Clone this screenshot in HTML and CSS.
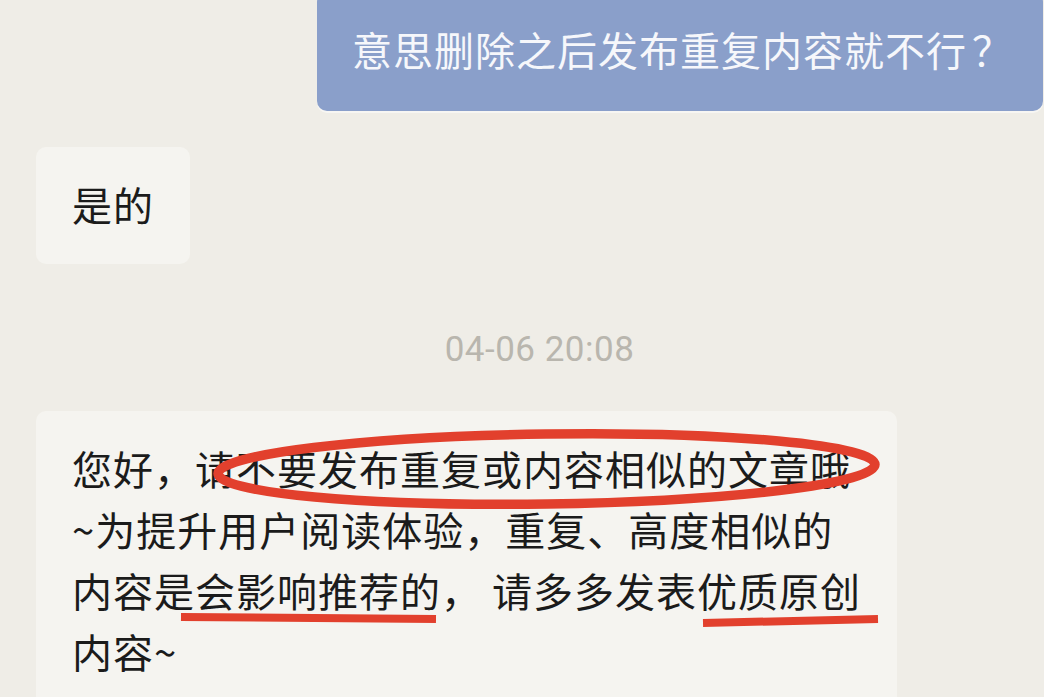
FILE: index.html
```html
<!DOCTYPE html>
<html lang="zh-CN">
<head>
<meta charset="utf-8">
<title>聊天</title>
<link rel="stylesheet" href="styles.css">
</head>
<body>
<div class="chat">
  <div class="bubble bubble-out">意思删除之后发布重复内容就不行<span class="qmark">？</span></div>
  <div class="bubble bubble-in">是的</div>
  <div class="timestamp">04-06 20:08</div>
  <div class="bubble bubble-in bubble-wide">
    您好，请不要发布重复或内容相似的文章哦<br>~为提升用户阅读体验，重复、高度相似的<br>内容是会影响推荐的， 请多多发表优质原创<br>内容~
    <svg class="marks" viewBox="0 0 861 300" width="861" height="300" aria-hidden="true">
      <ellipse cx="510.5" cy="58" rx="328.5" ry="35" transform="rotate(-0.8 510.5 58)" fill="none" stroke="#e2402d" stroke-width="9.5"/>
      <path d="M145 206 L400 208" stroke="#e2402d" stroke-width="8" fill="none"/>
      <path d="M667 212 L842 208" stroke="#e2402d" stroke-width="8" fill="none"/>
    </svg>
  </div>
</div>
</body>
</html>
```

FILE: styles.css
```css
html, body {
  margin: 0;
  padding: 0;
}

body {
  width: 1044px;
  height: 697px;
  overflow: hidden;
  background: #efede7;
  font-family: "Noto Sans CJK SC", "Noto Sans", sans-serif;
}

.chat {
  display: flex;
  flex-direction: column;
  align-items: flex-start;
  padding: 0 1px 0 36px;
}

.bubble {
  box-sizing: border-box;
  font-size: 40px;
  letter-spacing: 1px;
  line-height: 61px;
  border-radius: 10px;
  padding: 27px 36px 29px 36px;
}

.bubble-out {
  align-self: flex-end;
  margin-top: -8px;
  padding: 27px 30px 31px 35px;
  background: #8a9fca;
  color: #f6f7fb;
  box-shadow: 0 2px 0 rgba(255, 255, 255, 0.5);
}

.qmark {
  padding-left: 5px;
}

.bubble-in {
  background: #f5f4f0;
  color: #1b1b1b;
  margin-top: 36px;
}

.timestamp {
  align-self: stretch;
  text-align: center;
  margin-top: 66px;
  font-family: Roboto, "Noto Sans", sans-serif;
  font-size: 35px;
  letter-spacing: 0.5px;
  line-height: 40px;
  color: #b9b6ae;
}

.bubble-wide {
  position: relative;
  width: 861px;
  margin-top: 41px;
}

.marks {
  position: absolute;
  left: 0;
  top: 0;
  overflow: visible;
  pointer-events: none;
}
```
